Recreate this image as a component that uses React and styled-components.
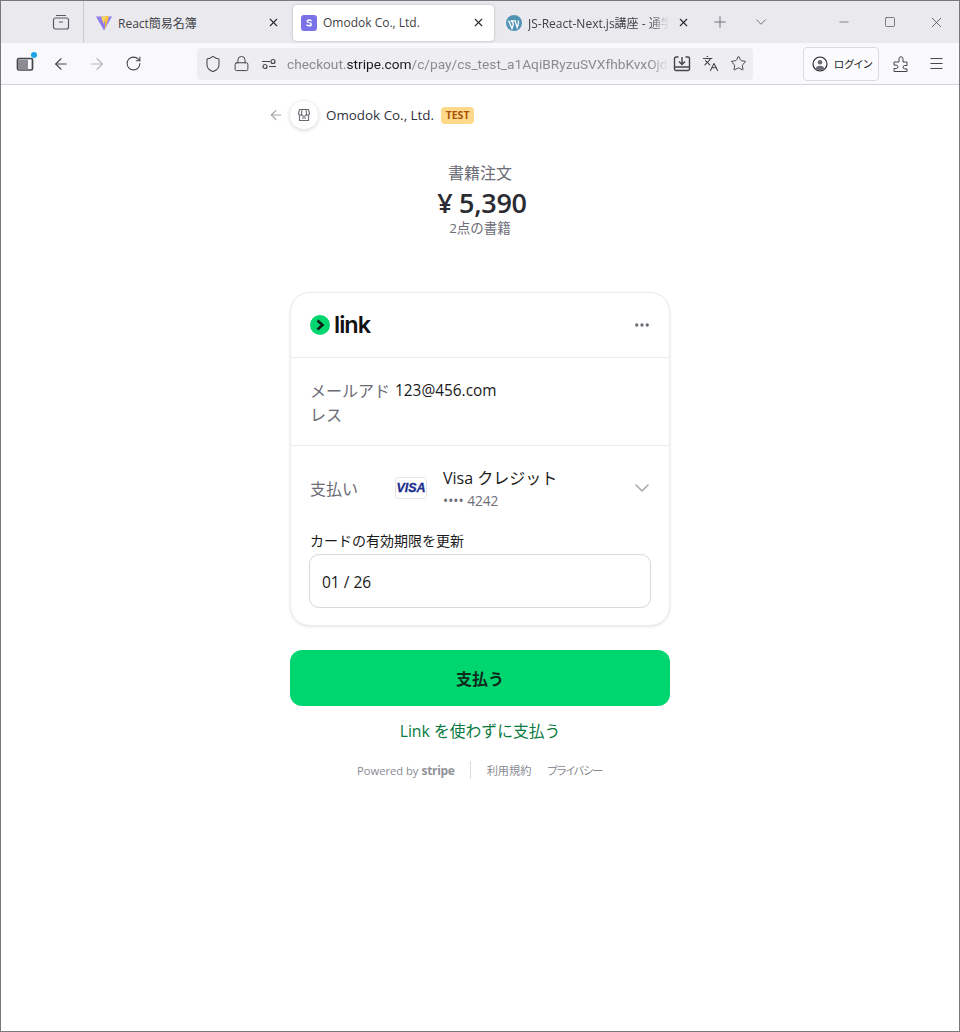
import React from "react";
import styled, { createGlobalStyle } from "styled-components";
import { ArrowLeft, ArrowRight, RotateCw, Shield, Lock, Star, Languages, Menu, X, Plus, ChevronDown, Minus, Square, MoreHorizontal } from "lucide-react";

const CJK = `"Noto Sans CJK JP", sans-serif`;
const UI = `"Open Sans", ${CJK}`;

const Global = createGlobalStyle`
  html, body { margin: 0; padding: 0; background: #fff; }
  body { font-family: ${UI}; color: #1a1a1a; }
  * { box-sizing: border-box; }
`;

const Win = styled.div`
  width: 960px; height: 1032px; border: 1px solid #77777c; display: flex; flex-direction: column; overflow: hidden; background: #fff;
`;
const TabStrip = styled.div`
  height: 42px; background: #e9e9ee; display: flex; align-items: center; flex: none;
`;
const ArchiveSlot = styled.div`
  width: 83px; height: 42px; display: flex; align-items: center; justify-content: flex-end; padding-right: 13px; border-right: 1px solid #c9c9cf; flex: none; color: #5b5b66;
`;
const Tabs = styled.div`
  display: flex; gap: 4px; margin-left: 4px; align-items: center;
`;
const Tab = styled.div`
  width: 201px; height: 36px; margin-top: 1px; border-radius: 4px; display: flex; align-items: center; padding: 0 8px; gap: 6px; position: relative; font-size: 12px; color: #3f3f46;
  background: ${p => (p.$active ? "#fff" : "transparent")};
  box-shadow: ${p => (p.$active ? "0 0 3px rgba(0,0,0,.22)" : "none")};
`;
const TabTitle = styled.span`
  flex: 1; min-width: 0; white-space: nowrap; overflow: hidden;
  mask-image: ${p => (p.$fade ? "linear-gradient(to right,#000 85%,transparent)" : "none")};
`;
const TabClose = styled.span`
  width: 16px; height: 16px; display: flex; align-items: center; justify-content: center; color: #2b2b33; flex: none;
`;
const StripBtn = styled.div`
  width: 41px; height: 36px; display: flex; align-items: center; justify-content: center; color: #6b6b73; flex: none;
`;
const Spacer = styled.div`flex: 1;`;
const WinBtn = styled.div`
  width: 46px; height: 42px; display: flex; align-items: center; justify-content: center; color: #3a3a3f; flex: none;
`;
const ToolBar = styled.div`
  height: 42px; flex: none; background: #f9f9fb; border-bottom: 1px solid #d4d4d8; display: flex; align-items: center; padding-left: 6px; color: #3b3b42;
`;
const ToolBtn = styled.div`
  width: 36px; height: 36px; display: flex; align-items: center; justify-content: center; flex: none; position: relative;
  color: ${p => (p.$off ? "#b4b4ba" : "#45454c")};
`;
const PuzzleBtn = styled(ToolBtn)`
  margin-left: 4px;
`;
const MenuBtn = styled(ToolBtn)`
  margin-left: -1px;
`;
const Dot = styled.span`
  position: absolute; top: 6px; right: 6px; width: 6px; height: 6px; border-radius: 50%; background: #1ea7e8;
`;
const UrlBar = styled.div`
  width: 556px; height: 32px; margin-left: 46px; border-radius: 4px; background: #eeeef1; display: flex; align-items: center; padding-left: 2px;
`;
const UrlIcon = styled.div`
  width: 28px; height: 32px; display: flex; align-items: center; justify-content: center; color: #45454c; flex: none;
`;
const UrlText = styled.div`
  width: 382px; margin-left: 4px; margin-right: -1px; font-family: "Roboto", sans-serif; font-size: 13.7px; white-space: nowrap; overflow: hidden; color: #8a8a90; flex: none;
  mask-image: linear-gradient(to right,#000 95%,transparent);
  b { font-weight: 400; color: #1b1b1f; }
`;
const LoginBtn = styled.div`
  width: 76px; height: 34px; margin-left: 50px; border: 1px solid #dcdce0; border-radius: 4px; background: #fbfbfd; display: flex; align-items: center; padding-left: 8px; gap: 6px; font-size: 10.5px; color: #1e1e22; flex: none;
  font-family: ${CJK}; font-feature-settings: "palt";
`;

const Page = styled.main`
  flex: 1; display: flex; justify-content: center; background: #fff;
`;
const Column = styled.div`
  width: 380px; display: flex; flex-direction: column;
`;
const Merchant = styled.div`
  height: 30px; margin-top: 15px; display: flex; align-items: center; position: relative; font-size: 13.4px; color: #30313d;
`;
const BackArrow = styled.div`
  position: absolute; left: -22px; top: 7px; color: #a3a3a8; display: flex;
`;
const StoreIcon = styled.div`
  width: 28px; height: 28px; border-radius: 50%; background: #fff; box-shadow: 0 1px 5px rgba(0,0,0,.18); display: flex; align-items: center; justify-content: center; color: #6a6a72; margin-right: 8px; flex: none;
`;
const Badge = styled.span`
  margin-left: 7px; height: 17px; width: 33px; border-radius: 4px; background: #ffd98a; color: #a8510a; font-size: 10.5px; font-weight: 700; display: flex; align-items: center; justify-content: center;
`;
const Summary = styled.div`
  margin-top: 32px; text-align: center; display: flex; flex-direction: column; align-items: center;
`;
const SumLabel = styled.div`
  font-size: 16px; line-height: 22px; color: #6d6e78; height: 22px;
`;
const Amount = styled.div`
  font-size: 27px; line-height: 38px; font-weight: 600; color: #2a2b33; height: 35px; letter-spacing: -.3px; padding-left: 4px;
`;
const SumSub = styled.div`
  font-size: 13.5px; line-height: 18px; color: #6d6e78;
`;
const Card = styled.section`
  margin-top: 55px; height: 334px; border: 1px solid #ececef; border-radius: 20px; box-shadow: 0 1px 3px rgba(0,0,0,.1); display: flex; flex-direction: column; background: #fff;
`;
const CardHead = styled.div`
  height: 65px; flex: none; border-bottom: 1px solid #ececef; display: flex; align-items: center; justify-content: space-between; padding: 0 18px 1px 19px;
`;
const Logo = styled.div`
  display: flex; align-items: center; gap: 4px; font-family: "Inter", sans-serif; font-size: 23.5px; font-weight: 600; letter-spacing: -1px; color: #111;
  line-height: 24px;
`;
const More = styled.div`color: #6a6a72; display: flex;`;
const EmailRow = styled.div`
  height: 88px; flex: none; border-bottom: 1px solid #ececef; padding: 21px 19px 0; display: flex; gap: 5px; font-size: 16px; line-height: 24px;
`;
const RowLabel = styled.div`
  width: 80px; color: #6a6b75; flex: none; font-family: ${UI};
`;
const Val = styled.div`
  color: #1a1a1a; font-size: 15.4px;
`;
const PayRow = styled.div`
  padding: 21px 19px 0; display: flex; align-items: center; height: 65px; flex: none;
`;
const PayLabel = styled.div`
  width: 85px; font-size: 16px; color: #6a6b75; flex: none; margin-top: -2px;
`;
const VisaCard = styled.div`
  width: 32px; height: 22px; margin-top: -2px; border: 1px solid #e6e6ea; border-radius: 3px; display: flex; align-items: center; justify-content: center; font-family: "Liberation Sans", sans-serif; font-style: italic; font-weight: 700; font-size: 12.5px; -webkit-text-stroke: .3px #1a2e8f; color: #1a2e8f; flex: none; margin-right: 16px; background: #fff;
`;
const PayInfo = styled.div`
  flex: 1; display: flex; flex-direction: column;
`;
const PayName = styled.div`font-size: 16px; line-height: 22px; color: #1a1a1a;`;
const PayNum = styled.div`font-size: 13.7px; line-height: 22px; color: #6d6e78; margin-top: 1px; margin-bottom: -1px;`;
const Chevron = styled.div`color: #a9aab0; display: flex; margin-right: -4px; margin-top: -2px;`;
const Field = styled.div`
  padding: 0 18px; margin-top: 20px; display: flex; flex-direction: column;
`;
const FieldLabel = styled.div`
  font-size: 14px; line-height: 20px; color: #1a1a1a; height: 20px; margin: 0 0 3px 1px;
`;
const Input = styled.div`
  height: 54px; border: 1px solid #d8d8dd; border-radius: 10px; padding: 1px 12px 0; display: flex; align-items: center; font-size: 15.5px; color: #1a1a1a;
`;
const PayBtn = styled.button`
  margin-top: 24px; height: 56px; padding-bottom: 2px; border: 0; border-radius: 12px; background: #00d66f; font-family: ${CJK}; font-size: 16px; font-weight: 700; color: #0f2b1c; flex: none;
`;
const AltLink = styled.div`
  margin-top: 13px; text-align: center; font-size: 15.8px; line-height: 24px; color: #0a7a42;
`;
const Footer = styled.footer`
  margin-top: 18px; display: flex; align-items: center; font-size: 11.2px; color: #8a8b93; height: 18px; padding-left: 67px; font-feature-settings: "palt";
`;
const Stripe = styled.b`
  font-size: 12px; font-weight: 700; letter-spacing: -.3px; margin-left: 3px; color: #92939a;
`;
const FootDiv = styled.span`
  width: 1px; height: 18px; background: #dcdce0; margin: 0 16px 0 15px; flex: none;
`;
const FootLink = styled.span`
  margin-right: 16px; letter-spacing: ${p => p.$tight ? "-1.1px" : "0"};
`;

const ArchiveIcon = () => (
  <svg width="18" height="18" viewBox="0 0 18 18" fill="none" stroke="currentColor" strokeWidth="1.2">
    <rect x="1.5" y="5" width="15" height="11" rx="2" />
    <path d="M4 2.5h10M7 9h4" />
  </svg>
);
const ViteIcon = () => (
  <svg width="16" height="16" viewBox="0 0 16 16">
    <path d="M0 1.5h16L8 15.5z" fill="#8f7bf0" />
    <path d="M9.5 .8 13 1.6 8.6 15z" fill="#ffc52e" />
    <path d="M5 1.5h5.5L7.5 9z" fill="#f9d65a" />
  </svg>
);
const StripeIcon = () => (
  <svg width="16" height="16" viewBox="0 0 16 16">
    <rect width="16" height="16" rx="3" fill="#7a73e8" />
    <path d="M10.8 5.2C10 4.6 9 4.3 8 4.3 6.6 4.3 5.6 5 5.6 6.2c0 2.4 4 1.6 4 2.9 0 .5-.5.8-1.3.8-1 0-2-.4-2.8-1v1.900c.8.500 1.800.8 2.800.8 1.600 0 2.700-.8 2.700-2.200 0-2.500-4-1.700-4-2.900 0-.4.400-.7 1.100-.7.800 0 1.700.3 2.500.8z" fill="#fff" />
  </svg>
);
const WpIcon = () => (
  <svg width="16" height="16" viewBox="0 0 16 16">
    <circle cx="8" cy="8" r="8" fill="#4f93b5" />
    <path d="M2.500 5.500 6 13.500l1.400-4-1-3h-1V5.800h4v.7H9.200l2 6 1.200-3.800c.5-1.600-.2-2.300-.6-3.200" fill="none" stroke="#fff" strokeWidth="1.300" />
  </svg>
);
const SidebarIcon = () => (
  <svg width="18" height="18" viewBox="0 0 18 18" fill="none" stroke="currentColor" strokeWidth="1.700">
    <rect x="1.500" y="3.500" width="15" height="11.500" rx="1.500" />
    <rect x="2" y="4.500" width="10" height="10" fill="#8b8b92" stroke="none" />
  </svg>
);
const SliderIcon = () => (
  <svg width="16" height="16" viewBox="0 0 16 16" fill="none" stroke="currentColor" strokeWidth="1.200">
    <path d="M1 5.500h8M8 10.500h7" />
    <circle cx="12" cy="5.500" r="2" />
    <circle cx="4" cy="10.500" r="2" />
  </svg>
);
const SaveIcon = () => (
  <svg width="18" height="18" viewBox="0 0 18 18" fill="none" stroke="currentColor" strokeWidth="1.400">
    <path d="M5.500 2H3a1.500 1.500 0 0 0-1.500 1.500V14A1.500 1.500 0 0 0 3 15.500h12a1.500 1.500 0 0 0 1.500-1.500V3.500A1.500 1.500 0 0 0 15 2h-2.500M1.500 12h15M9 2v7M6 6.500 9 9.500l3-3" />
  </svg>
);
const UserIcon = () => (
  <svg width="16" height="16" viewBox="0 0 16 16" fill="none" stroke="currentColor" strokeWidth="1.100">
    <circle cx="8" cy="8" r="7" />
    <circle cx="8" cy="6.300" r="2.300" fill="#6b6b73" stroke="none" />
    <path d="M3.500 12.500c1-2 2.500-2.700 4.500-2.700s3.500.7 4.500 2.700A6.500 6.500 0 0 1 3.500 12.500z" fill="#6b6b73" stroke="none" />
  </svg>
);
const ShopIcon = () => (
  <svg width="14" height="14" viewBox="0 0 14 14" fill="none" stroke="currentColor" strokeWidth="1.100">
    <path d="M2.500 1.500h9l1 4a1.500 1.500 0 0 1-3 .3 1.500 1.500 0 0 1-5 0 1.500 1.500 0 0 1-3-.3zM5 1.500 4.500 5.800M9 1.500l.5 4.300M2.500 7.500v5h9v-5M5 10h4" />
  </svg>
);
const LinkMark = () => (
  <svg width="20" height="20" viewBox="0 0 20 20">
    <circle cx="10" cy="10" r="10" fill="#00d66f" />
    <path d="M7.500 5.500 12.500 10l-5 4.500" fill="none" stroke="#0d1f16" strokeWidth="2.600" />
  </svg>
);
const PuzzleIcon = () => (
  <svg width="18" height="18" viewBox="0 0 18 18" fill="none" stroke="currentColor" strokeWidth="1" strokeLinejoin="round">
    <path d="M2 7h5V3.800a2 2 0 0 1 4 0V7h4v3.500h-2.200a1.700 1.700 0 0 0 0 3.400H15V16.500H2v-3h2.200a1.700 1.700 0 0 0 0-3.400H2z" />
  </svg>
);

export default function App() {
  return (
    <>
      <Global />
      <Win>
        <TabStrip>
          <ArchiveSlot><ArchiveIcon /></ArchiveSlot>
          <Tabs>
            <Tab><ViteIcon /><TabTitle>React簡易名簿</TabTitle><TabClose><X size={13} /></TabClose></Tab>
            <Tab $active><StripeIcon /><TabTitle>Omodok Co., Ltd.</TabTitle><TabClose><X size={13} /></TabClose></Tab>
            <Tab><WpIcon /><TabTitle $fade>JS-React-Next.js講座 - 通学制のプログラミング</TabTitle><TabClose><X size={13} /></TabClose></Tab>
          </Tabs>
          <StripBtn><Plus size={18} strokeWidth={1.25} /></StripBtn>
          <StripBtn><ChevronDown size={18} strokeWidth={1.25} /></StripBtn>
          <Spacer />
          <WinBtn><Minus size={14} strokeWidth={1} /></WinBtn>
          <WinBtn><Square size={12} strokeWidth={1.25} /></WinBtn>
          <WinBtn><X size={17} strokeWidth={1} /></WinBtn>
        </TabStrip>
        <ToolBar>
          <ToolBtn><SidebarIcon /><Dot /></ToolBtn>
          <ToolBtn><ArrowLeft size={18} strokeWidth={1.5} /></ToolBtn>
          <ToolBtn $off><ArrowRight size={18} strokeWidth={1.5} /></ToolBtn>
          <ToolBtn><RotateCw size={17} strokeWidth={1.5} /></ToolBtn>
          <UrlBar>
            <UrlIcon><Shield size={18} strokeWidth={1.4} /></UrlIcon>
            <UrlIcon><Lock size={17} strokeWidth={1.4} /></UrlIcon>
            <UrlIcon><SliderIcon /></UrlIcon>
            <UrlText>checkout.<b>stripe.com</b>/c/pay/cs_test_a1AqiBRyzuSVXfhbKvxOjdHm</UrlText>
            <UrlIcon><SaveIcon /></UrlIcon>
            <UrlIcon><Languages size={17} strokeWidth={1.5} /></UrlIcon>
            <UrlIcon><Star size={17} strokeWidth={1.4} /></UrlIcon>
          </UrlBar>
          <LoginBtn><UserIcon />ログイン</LoginBtn>
          <PuzzleBtn><PuzzleIcon /></PuzzleBtn>
          <MenuBtn><Menu size={17} strokeWidth={1.4} /></MenuBtn>
        </ToolBar>
        <Page>
          <Column>
            <Merchant>
              <BackArrow><ArrowLeft size={16} strokeWidth={1.6} /></BackArrow>
              <StoreIcon><ShopIcon /></StoreIcon>
              Omodok Co., Ltd.
              <Badge>TEST</Badge>
            </Merchant>
            <Summary>
              <SumLabel>書籍注文</SumLabel>
              <Amount>¥ 5,390</Amount>
              <SumSub>2点の書籍</SumSub>
            </Summary>
            <Card>
              <CardHead>
                <Logo><LinkMark />link</Logo>
                <More><MoreHorizontal size={18} strokeWidth={2.4} /></More>
              </CardHead>
              <EmailRow>
                <RowLabel>メールアドレス</RowLabel>
                <Val>123@456.com</Val>
              </EmailRow>
              <PayRow>
                <PayLabel>支払い</PayLabel>
                <VisaCard>VISA</VisaCard>
                <PayInfo>
                  <PayName>Visa クレジット</PayName>
                  <PayNum>•••• 4242</PayNum>
                </PayInfo>
                <Chevron><ChevronDown size={24} strokeWidth={1.5} /></Chevron>
              </PayRow>
              <Field>
                <FieldLabel>カードの有効期限を更新</FieldLabel>
                <Input>01 / 26</Input>
              </Field>
            </Card>
            <PayBtn>支払う</PayBtn>
            <AltLink>Link を使わずに支払う</AltLink>
            <Footer>
              Powered by<Stripe>stripe</Stripe>
              <FootDiv />
              <FootLink>利用規約</FootLink>
              <FootLink $tight>プライバシー</FootLink>
            </Footer>
          </Column>
        </Page>
      </Win>
    </>
  );
}
